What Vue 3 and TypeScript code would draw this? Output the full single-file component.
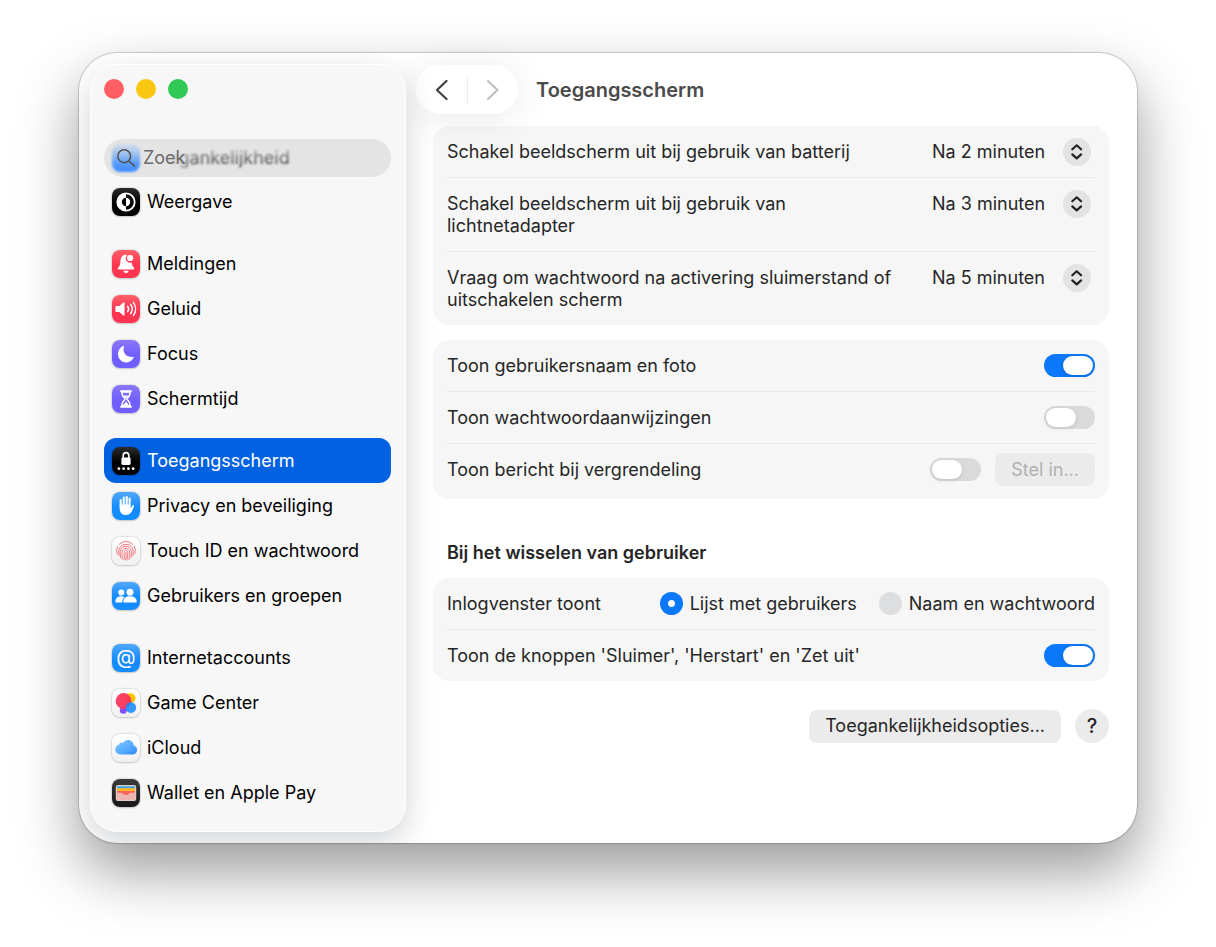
<script setup lang="ts">
import { ref } from 'vue'

interface NavItem {
  id: string
  label: string
}

const navGroups: NavItem[][] = [
  [{ id: 'appearance', label: 'Weergave' }],
  [
    { id: 'notifications', label: 'Meldingen' },
    { id: 'sound', label: 'Geluid' },
    { id: 'focus', label: 'Focus' },
    { id: 'screentime', label: 'Schermtijd' },
  ],
  [
    { id: 'lock', label: 'Toegangsscherm' },
    { id: 'privacy', label: 'Privacy en beveiliging' },
    { id: 'touchid', label: 'Touch ID en wachtwoord' },
    { id: 'users', label: 'Gebruikers en groepen' },
  ],
  [
    { id: 'internet', label: 'Internetaccounts' },
    { id: 'gamecenter', label: 'Game Center' },
    { id: 'icloud', label: 'iCloud' },
    { id: 'wallet', label: 'Wallet en Apple Pay' },
  ],
]

const active = ref('lock')
const query = ref('')

const delays = ['Na 2 minuten', 'Na 3 minuten', 'Na 5 minuten']
const timers = ref([
  { id: 'battery', label: 'Schakel beeldscherm uit bij gebruik van batterij', value: 'Na 2 minuten' },
  { id: 'adapter', label: 'Schakel beeldscherm uit bij gebruik van lichtnetadapter', value: 'Na 3 minuten' },
  { id: 'password', label: 'Vraag om wachtwoord na activering sluimerstand of uitschakelen scherm', value: 'Na 5 minuten' },
])

const showUser = ref(true)
const showHints = ref(false)
const showMessage = ref(false)
const loginWindow = ref('list')
const showButtons = ref(true)
</script>

<template>
  <div class="desktop">
    <div class="window">
      <aside class="sidebar">
        <div class="lights">
          <button class="light red" aria-label="Sluit"></button>
          <button class="light yellow" aria-label="Minimaliseer"></button>
          <button class="light green" aria-label="Zoom"></button>
        </div>

        <div class="search">
          <div class="underlay" aria-hidden="true">
            <span class="underlay-icon"></span>
            <span class="underlay-text">Toegankelijkheid</span>
          </div>
          <svg class="search-icon" viewBox="0 0 20 20" aria-hidden="true">
            <circle cx="8.2" cy="8.2" r="6.4" />
            <path d="M13 13l5.4 5.2" />
          </svg>
          <input v-model="query" type="text" placeholder="Zoek" aria-label="Zoek" />
        </div>

        <nav class="nav">
          <ul v-for="(group, g) in navGroups" :key="g">
            <li v-for="item in group" :key="item.id">
              <a
                href="#"
                class="nav-item"
                :class="{ active: active === item.id }"
                @click.prevent="active = item.id"
              >
                <span class="tile" :class="item.id">
                  <svg viewBox="0 0 28 28" aria-hidden="true">
                    <g v-if="item.id === 'appearance'">
                      <circle cx="14" cy="14" r="8.7" fill="none" stroke="#fff" stroke-width="1.8" />
                      <path d="M14 5.5a8.5 8.5 0 0 0 0 17v-4.3a4.2 4.2 0 0 1 0-8.4z" fill="#fff" />
                      <path d="M14 9.8a4.2 4.2 0 0 1 0 8.4z" fill="#fff" />
                    </g>
                    <g v-else-if="item.id === 'notifications'" fill="#fff">
                      <path d="M13.8 4.8c-3.3.2-5.1 2.5-5.3 5.6-.2 3.9-.7 5.5-2.4 7.2-.8.8-.4 1.9.7 1.9h14.4c1.1 0 1.5-1.1.7-1.9-1.3-1.3-1.9-2.7-2.2-5.1a4.4 4.4 0 0 1-5.2-6.6c.2-.4.4-.7.7-1z" />
                      <circle cx="18.1" cy="8" r="3.1" />
                      <path d="M11.4 20.7h5.2c-.2 1.5-1.3 2.4-2.6 2.4s-2.4-.9-2.6-2.4z" />
                    </g>
                    <g v-else-if="item.id === 'sound'" fill="none" stroke="#fff" stroke-width="1.5" stroke-linecap="round">
                      <path d="M4.2 11h3.1l4.2-3.6c.5-.4 1-.1 1 .5v12.2c0 .6-.5.9-1 .5L7.3 17H4.2c-.5 0-.8-.3-.8-.8v-4.4c0-.5.3-.8.8-.8z" fill="#fff" stroke="none" />
                      <path d="M15.7 11.3c1.1 1.6 1.1 3.8 0 5.4M18.6 9.4c1.9 2.7 1.9 6.5 0 9.2M21.5 7.6c2.7 3.8 2.7 9 0 12.8" />
                    </g>
                    <path
                      v-else-if="item.id === 'focus'"
                      d="M11.3 6c.4-.3.9.1.7.6-2.1 5.8 2.4 11.4 9.1 10.1.5-.1.9.4.6.9A8.2 8.2 0 0 1 6 14C6 10.500 8.200 7.300 11.300 6z"
                      fill="#fff"
                    />
                    <g v-else-if="item.id === 'screentime'" fill="none" stroke="#fff" stroke-width="1.4" stroke-linejoin="round">
                      <path d="M8.600 5.500h10.800v1.400H8.600zM8.600 21h10.800v1.400H8.600z" fill="#fff" stroke-width="0.600" />
                      <path d="M9.900 7c0 3.600 1 4.900 2.800 6.300.5.4.5 1 0 1.400-1.800 1.400-2.800 2.700-2.800 6.300h8.200c0-3.600-1-4.900-2.800-6.300-.5-.4-.5-1 0-1.400C17.100 11.900 18.100 10.600 18.100 7z" />
                      <path d="M11.500 10.500h5L14 13.500zM14 16.500l3.200 4h-6.400z" fill="#fff" stroke="none" />
                    </g>
                    <g v-else-if="item.id === 'lock'" fill="#fff">
                      <rect x="9.400" y="10.600" width="9.200" height="7.400" rx="1.400" />
                      <path d="M11.200 11V8.400a2.800 2.800 0 0 1 5.600 0V11" fill="none" stroke="#fff" stroke-width="1.600" />
                      <circle cx="6.900" cy="21.700" r="1.400" />
                      <circle cx="11.600" cy="21.700" r="1.400" />
                      <circle cx="16.400" cy="21.700" r="1.400" />
                      <circle cx="21.100" cy="21.700" r="1.400" />
                    </g>
                    <g v-else-if="item.id === 'privacy'" fill="none" stroke="#fff" stroke-width="2.100" stroke-linecap="round">
                      <path d="M8.700 14V8M11.700 13V5.600M14.700 13V5M17.600 13.500V6.600" />
                      <path d="M7.650 12.500h11v3.700l1.900-2.800c.6-.8 1.800-.2 1.400.8-1.700 4.800-3.200 8.800-8.100 8.800-4.400 0-6.200-3.200-6.200-7z" fill="#fff" stroke="none" />
                    </g>
                    <g v-else-if="item.id === 'touchid'" fill="none" stroke="#f2777f" stroke-width="1" stroke-linecap="round">
                      <path d="M7.300 7.200a9.400 9.400 0 0 1 13.400 0M5.500 9.600a9.500 9.500 0 0 0-.5 7.200M22.300 9.300a9.600 9.600 0 0 1 .6 7.400" />
                      <path d="M7 18.800c-1.300-6.300 1-11.300 7-11.400 5.600-.1 8.300 5 6.900 11.200M9 21.100c-2-6.100-1.100-11.600 5-11.700 5.100 0 6.400 5.600 4.900 11.200" />
                      <path d="M11.200 22.500c-2.100-5.400-2-11 2.800-11.100 4.200 0 4.300 5.900 2.900 11" />
                      <path d="M13.300 23c-1.300-3.700-2-9.500.7-9.600 2.500 0 1.900 5.700.9 9.600M14 15.600c.2 2.400 0 4.300 0 5.800" />
                    </g>
                    <g v-else-if="item.id === 'users'" fill="#fff">
                      <circle cx="9.300" cy="10.400" r="3" />
                      <path d="M3.400 19.800c0-3.300 2.300-5.500 5.800-5.500 1.300 0 2.400.3 3.300.9-1.500 1.100-2.200 2.700-2.300 5.300H4.200c-.5 0-.8-.2-.8-.7z" />
                      <circle cx="18" cy="10.200" r="3.400" />
                      <path d="M11.300 19.700c0-3.400 2.600-5.400 6.700-5.400s6.700 2 6.700 5.400c0 .5-.3.800-.8.800H12.100c-.5 0-.8-.3-.8-.8z" />
                    </g>
                    <text v-else-if="item.id === 'internet'" class="at" x="14" y="20" text-anchor="middle">@</text>
                    <g v-else-if="item.id === 'gamecenter'">
                      <circle cx="18.500" cy="9.300" r="5" fill="#ffc300" />
                      <circle cx="11.300" cy="21.300" r="3.500" fill="#8a4df5" />
                      <circle cx="11.600" cy="12" r="7.900" fill="#fb3158" opacity="0.930" />
                      <circle cx="18.900" cy="18.600" r="5.300" fill="#178bff" opacity="0.880" />
                    </g>
                    <g v-else-if="item.id === 'icloud'">
                      <defs>
                        <linearGradient id="cloud-fill" x1="0" x2="1" y1="0" y2="1">
                          <stop offset="0" stop-color="#7fc6ff" />
                          <stop offset="0.500" stop-color="#5cb0ff" />
                          <stop offset="1" stop-color="#2f86fb" />
                        </linearGradient>
                      </defs>
                      <path d="M8.200 20.500A5.200 5.200 0 0 1 3.200 15.500c0-2.600 1.800-4.300 3.800-4.700.4-1.800 2.400-2.700 4-1.900 1.200-2.100 3-3 5-3 3.200 0 5.600 2.400 5.800 5.600 2.200.6 3.300 2.500 3.300 4.400 0 2.600-2 4.600-4.700 4.600z" fill="url(#cloud-fill)" />
                    </g>
                    <g v-else>
                      <rect x="3.800" y="6" width="20.400" height="16" rx="2" fill="#d8d5ce" />
                      <rect x="5" y="7.200" width="18" height="3" rx="1" fill="#3fa0e8" />
                      <rect x="5" y="9.200" width="18" height="3.200" fill="#ffb820" />
                      <path d="M5 12h18v6H5z" fill="#ff6560" />
                      <path d="M4.500 13.800h3.800c1.400 0 2 .5 2.900 1.200 1.700 1.300 3.900 1.300 5.600 0 .9-.7 1.500-1.200 2.900-1.200h3.800V20c0 .8-.5 1.300-1.300 1.300H5.800c-.8 0-1.300-.5-1.300-1.300z" fill="#efb5b3" />
                    </g>
                  </svg>
                </span>
                <span>{{ item.label }}</span>
              </a>
            </li>
          </ul>
        </nav>
      </aside>

      <main class="content">
        <header class="toolbar">
          <div class="history">
            <button aria-label="Vorige">
              <svg viewBox="0 0 14 22" aria-hidden="true"><path d="M12.500 2L3 11l9.500 9" /></svg>
            </button>
            <span class="divider"></span>
            <button aria-label="Volgende" disabled>
              <svg viewBox="0 0 14 22" aria-hidden="true"><path d="M2 2L11.500 11l-9.500 9" /></svg>
            </button>
          </div>
          <h1>Toegangsscherm</h1>
        </header>

        <div class="panels">
          <section class="card">
            <div v-for="t in timers" :key="t.id" class="row">
              <label class="label" :for="t.id">{{ t.label }}</label>
              <div class="control picker">
                <select :id="t.id" v-model="t.value">
                  <option v-for="d in delays" :key="d">{{ d }}</option>
                </select>
                <svg class="stepper" viewBox="0 0 28 28" aria-hidden="true">
                  <path d="M9.300 11.300L13.700 7.300l4.400 4M9.300 16.400l4.400 4 4.400-4" />
                </svg>
              </div>
            </div>
          </section>

          <section class="card toggles">
            <div class="row">
              <label class="label" for="show-user">Toon gebruikersnaam en foto</label>
              <div class="control"><input id="show-user" v-model="showUser" class="switch" type="checkbox" /></div>
            </div>
            <div class="row">
              <label class="label" for="show-hints">Toon wachtwoordaanwijzingen</label>
              <div class="control"><input id="show-hints" v-model="showHints" class="switch" type="checkbox" /></div>
            </div>
            <div class="row">
              <label class="label" for="show-message">Toon bericht bij vergrendeling</label>
              <div class="control">
                <input id="show-message" v-model="showMessage" class="switch" type="checkbox" />
                <button class="push" :disabled="!showMessage">Stel in...</button>
              </div>
            </div>
          </section>

          <h2>Bij het wisselen van gebruiker</h2>

          <section class="card">
            <div class="row">
              <span id="login-label" class="label">Inlogvenster toont</span>
              <div class="control radios" role="radiogroup" aria-labelledby="login-label">
                <label><input v-model="loginWindow" type="radio" name="login" value="list" />Lijst met gebruikers</label>
                <label><input v-model="loginWindow" type="radio" name="login" value="name" />Naam en wachtwoord</label>
              </div>
            </div>
            <div class="row">
              <label class="label" for="show-buttons">Toon de knoppen 'Sluimer', 'Herstart' en 'Zet uit'</label>
              <div class="control"><input id="show-buttons" v-model="showButtons" class="switch" type="checkbox" /></div>
            </div>
          </section>

          <footer class="actions">
            <button class="push">Toegankelijkheidsopties...</button>
            <button class="help" aria-label="Help">?</button>
          </footer>
        </div>
      </main>
    </div>
  </div>
</template>

<style>
body {
  background: #fff;
}
</style>

<style scoped>
* {
  box-sizing: border-box;
}

.desktop {
  display: flex;
  min-height: 100vh;
  padding: 53px 79px 104px;
  font-family: Inter, "Liberation Sans", sans-serif;
  font-size: 18px;
  line-height: 22px;
  color: #262626;
}

button,
input,
select {
  margin: 0;
  padding: 0;
  border: 0;
  background: none;
  font: inherit;
  color: inherit;
  appearance: none;
}

h1,
h2,
ul {
  margin: 0;
  padding: 0;
}

.window {
  display: flex;
  flex: 1;
  min-width: 0;
  border-radius: 38px;
  background: #fff;
  box-shadow: 0 0 1px 1px rgba(0, 0, 0, 0.18), 0 28px 60px rgba(0, 0, 0, 0.4);
}

.sidebar {
  flex: none;
  width: 316px;
  margin: 11px;
  margin-right: 0;
  padding: 14px 14px 14px 13px;
  border: 1px solid #fff;
  border-radius: 27px;
  background: #f7f7f7;
  box-shadow: 0 10px 30px rgba(30, 40, 50, 0.2);
  clip-path: inset(-11px -40px -11px -11px round 38px 0 0 38px);
}

.lights {
  display: flex;
  gap: 12px;
}

.light {
  width: 20px;
  height: 20px;
  border-radius: 50%;
}

.red {
  background: #ff5f63;
}

.yellow {
  background: #fbc60f;
}

.green {
  background: #31c956;
}

.search {
  position: relative;
  display: flex;
  align-items: center;
  gap: 7px;
  height: 38px;
  margin-top: 40px;
  padding-left: 12px;
  border-radius: 19px;
  background: #e4e4e4;
  overflow: hidden;
}

.underlay {
  position: absolute;
  inset: 0;
  display: flex;
  align-items: center;
  gap: 7px;
  padding-left: 8px;
  filter: blur(1px);
  mask-image: linear-gradient(to bottom, transparent, #000 24px);
}

.underlay-icon {
  width: 28px;
  height: 28px;
  border-radius: 8px;
  background: linear-gradient(#8fbcf5, #3f8cff);
}

.underlay-text {
  color: transparent;
  background: linear-gradient(to right, transparent 20px, #444 48px);
  background-clip: text;
}

.search-icon {
  position: relative;
  width: 20px;
  height: 20px;
  fill: none;
  stroke: #555;
  stroke-width: 1.6;
  stroke-linecap: round;
}

.search input {
  position: relative;
  flex: 1;
  min-width: 0;
  outline: none;
}

.search input::placeholder {
  color: #6b6b6b;
  opacity: 1;
}

.nav {
  display: flex;
  flex-direction: column;
  gap: 17px;
  margin-top: 2px;
}

.nav ul {
  list-style: none;
}

.nav-item {
  display: flex;
  align-items: center;
  gap: 7px;
  height: 45px;
  padding-left: 8px;
  border-radius: 12px;
  color: #000;
  text-decoration: none;
}

.nav-item.active {
  background: #0062e1;
  color: #fff;
}

.tile {
  width: 28px;
  height: 28px;
  border-radius: 8px;
  background: linear-gradient(#fff, #f0f0f0);
  box-shadow: 0 0 2px rgba(0, 0, 0, 0.3), 0 1px 2px rgba(0, 0, 0, 0.12);
}

.tile svg {
  display: block;
}

.appearance,
.lock {
  background: linear-gradient(#2b2b2b, #000 55%);
}

.notifications,
.sound {
  background: linear-gradient(#ff5f69, #ff3450 55%);
}

.focus,
.screentime {
  background: linear-gradient(#8b78f7, #705eff 55%);
}

.privacy,
.users,
.internet {
  background: linear-gradient(#51a8fc, #148bff 55%);
}

.wallet {
  background: linear-gradient(#3c3c3c, #171717);
}

.at {
  fill: #fff;
  font-size: 20px;
}

.content {
  flex: 1;
  min-width: 0;
}

.toolbar {
  display: flex;
  align-items: center;
  gap: 18px;
  padding: 12px 28px 12px 10px;
}

.history {
  display: flex;
  align-items: center;
  width: 102px;
  height: 49px;
  border-radius: 25px;
  background: #fff;
  box-shadow: 0 4px 36px rgba(0, 0, 0, 0.09);
}

.history button {
  flex: 1;
  height: 100%;
}

.history svg {
  display: block;
  width: 14px;
  height: 22px;
  margin: 0 auto;
  fill: none;
  stroke: #404040;
  stroke-width: 2.2;
  stroke-linecap: round;
  stroke-linejoin: round;
}

.history button:disabled svg {
  stroke: #bfbfbf;
}

.divider {
  width: 1px;
  height: 28px;
  background: #ececec;
}

h1 {
  font-size: 20px;
  line-height: 24px;
  font-weight: 600;
  color: #4a4a4a;
}

.panels {
  padding: 0 28px 28px 27px;
}

.card {
  padding: 0 14px;
  border-radius: 16px;
  background: #f6f6f6;
}

.row {
  display: flex;
  justify-content: space-between;
  align-items: flex-start;
  gap: 24px;
}

.row + .row {
  border-top: 1px solid #e9e9e9;
}

.label {
  padding: 15px 0 14px;
}

.control {
  display: flex;
  flex: none;
  align-items: center;
  gap: 14px;
  height: 51px;
}

.picker {
  position: relative;
  padding-right: 4px;
}

.picker select {
  height: 28px;
  padding-right: 45px;
}

.stepper {
  position: absolute;
  right: 4px;
  width: 28px;
  height: 28px;
  border-radius: 50%;
  background: #e3e3e3;
  fill: none;
  stroke: #222;
  stroke-width: 2.2;
  stroke-linecap: round;
  stroke-linejoin: round;
  pointer-events: none;
}

.toggles {
  margin-top: 15px;
  padding-bottom: 4px;
}

.switch {
  width: 51px;
  height: 23px;
  padding: 2px;
  border-radius: 12px;
  background: #dadadb;
}

.switch::before {
  content: "";
  display: block;
  width: 30px;
  height: 19px;
  border-radius: 10px;
  background: #fff;
  box-shadow: 0 1px 4px rgba(0, 0, 0, 0.12);
}

.switch:checked {
  background: #0a78f8;
}

.switch:checked::before {
  margin-left: auto;
}

.push {
  height: 33px;
  padding: 0 16px;
  border-radius: 8px;
  background: #ebebeb;
}

.push:disabled {
  color: #b0b0b0;
}

h2 {
  margin: 43px 0 14px;
  padding-left: 14px;
  font-size: 18px;
  line-height: 22px;
  font-weight: 600;
}

.radios {
  gap: 22px;
}

.radios label {
  display: flex;
  align-items: center;
  gap: 7px;
}

.radios input {
  width: 23px;
  height: 23px;
  border-radius: 50%;
  background: #dddee0;
}

.radios input:checked {
  background: radial-gradient(circle, #fff 3px, #0a78f8 4px);
}

.actions {
  display: flex;
  justify-content: flex-end;
  align-items: center;
  gap: 14px;
  margin-top: 28px;
}

.help {
  width: 34px;
  height: 34px;
  border-radius: 50%;
  background: #ebebeb;
  font-size: 20px;
  font-weight: 500;
}
</style>
